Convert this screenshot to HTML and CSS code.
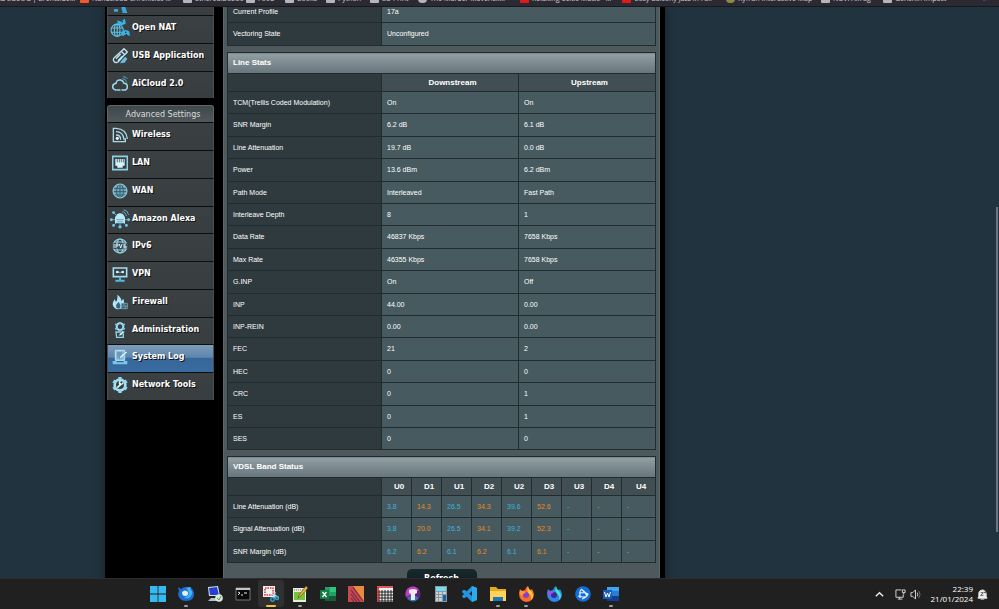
FILE: index.html
```
<!DOCTYPE html>
<html lang="en">
<head>
	<meta charset="utf-8">
	<meta name="viewport" content="width=device-width, initial-scale=1.0">
	<title>System Log - DSL</title>
	<link rel="stylesheet" href="styles.css">
</head>
<body>
	<nav class="bookmarks" aria-label="Bookmarks">
		<a href="#">&amp; SGCOG | Brentside…</a>
		<a href="#"><i class="fav orange"></i>Nandcloud Chronicles …</a>
		<a href="#"><i class="fav"></i>EtherealDSLOs</a>
		<a href="#"><i class="fav"></i>Food</a>
		<a href="#"><i class="fav"></i>Books</a>
		<a href="#"><i class="fav"></i>Python</a>
		<a href="#"><i class="fav"></i>3D Print</a>
		<a href="#"><i class="fav globe"></i>The Murder Maverick…</a>
		<a href="#"><i class="fav red"></i>Relaxing Celtic Music - …</a>
		<a href="#"><i class="fav red"></i>Cosy Balcony Jazz in Fall</a>
		<a href="#"><i class="fav olive"></i>Kyfrun Interactive Map</a>
		<a href="#"><i class="fav"></i>NUVI Alfrug</a>
		<a href="#"><i class="fav"></i>Genshin Impact</a>
		<a href="#">»</a>
	</nav>

	<div class="page">
		<div class="wrap">
			<nav class="menu" aria-label="Router menu">
				<ul class="general">
					<li class="cut"><svg viewBox="0 0 24 24"><path d="M3 15h6v4H3zM14 12h6l3 9h-7z" fill="#37a9dc"/></svg></li>
					<li><a href="#">
						<svg class="big" viewBox="0 0 28 28"><g fill="none" stroke="#5cc0e6" stroke-width="1.6"><circle cx="10" cy="17" r="8.5"/><ellipse cx="10" cy="17" rx="4" ry="8.5"/><path d="M2 14h16M2 20h16M10 8v18"/></g><path d="M10 3l5 2 6-4 1 7-5 2-6-2zM18 18q5-3 9 1l1 6-3-1-2-2-4 3-3 0z" fill="#37b4e5"/><circle cx="17" cy="5" r="1" fill="#123"/><circle cx="22" cy="20" r="1" fill="#123"/></svg>
						Open NAT</a></li>
					<li><a href="#">
						<svg viewBox="0 0 24 24"><g fill="none" stroke="#c0e8f5" stroke-width="2" stroke-linejoin="round"><path d="M3 15L14 5l5 5L9 21q-4 2-6-1-2-2 0-5zM14 5l4-4 5 5-4 4M6 16l7-7M9 19l7-7"/></g><path d="M15 18l5-5 3 3-4 6-7 1z" fill="#65bddd"/></svg>
						USB Application</a></li>
					<li><a href="#">
						<svg viewBox="0 0 24 24"><g fill="none" stroke="#9fd9ee" stroke-width="2.2" stroke-linecap="round"><path d="M6 21q-5-1-5-5t5-5q1-6 7-5 4 1 5 5 5 0 5 5t-5 5h-3M8 21h4"/><path d="M16 4q5 0 6 5M17 1q5 0 6 3" stroke="#55a8ca" stroke-width="1.4"/></g></svg>
						AiCloud 2.0</a></li>
				</ul>
				<h2>Advanced Settings</h2>
				<ul class="advanced">
					<li><a href="#">
						<svg viewBox="0 0 24 24"><g fill="none" stroke="#add9e6" stroke-width="2"><path d="M6 2H2v20h18v-5M6 7q11 0 12 12M6 12q7 0 7 7M6 2q16 1 17 16"/></g><circle cx="8" cy="17" r="2.4" fill="#e3f7fb"/></svg>
						Wireless</a></li>
					<li><a href="#">
						<svg viewBox="0 0 24 24"><path d="M1 2h22v20H1z" fill="none" stroke="#8bd2e9" stroke-width="2.4"/><path d="M5 6h14v10h-3v3H8v-3H5z" fill="#d6f4fb"/><path d="M8 6v5M11 6v5M14 6v5M17 6v5" stroke="#39515c" stroke-width="1.2"/></svg>
						LAN</a></li>
					<li><a href="#">
						<svg viewBox="0 0 24 24"><circle cx="12" cy="12" r="10.5" fill="#69a8c2"/><g fill="none" stroke="#3a535e" stroke-width="1.3"><ellipse cx="12" cy="12" rx="5" ry="10"/><path d="M2 8h20M1 13h22M3 18h18M12 1v22"/></g><circle cx="12" cy="12" r="10.5" fill="none" stroke="#a5dcec" stroke-width="1.4"/></svg>
						WAN</a></li>
					<li><a href="#">
						<svg class="big" viewBox="0 0 28 28"><path d="M7 20V12q2-6 7-6t7 6v8z" fill="#b9eaf6"/><path d="M9 15h10M10 18h8" stroke="#4b8396"/><g fill="#72cdec"><circle cx="2" cy="15" r="2"/><circle cx="26" cy="15" r="2"/><circle cx="5" cy="5" r="2"/><circle cx="5" cy="23" r="2"/><circle cx="23" cy="23" r="2"/><circle cx="14" cy="25" r="2.4"/></g><path d="M5 5l5 5M5 23l4-4M23 23l-4-4M14 20v5M2 15h5M21 15h5M17 4q5 0 6 6M19 1q6 1 7 7" fill="none" stroke="#62b5d2" stroke-width="1.3"/></svg>
						Amazon Alexa</a></li>
					<li><a href="#">
						<svg viewBox="0 0 24 24"><g fill="none" stroke="#96d4e8" stroke-width="1.7"><circle cx="12" cy="12" r="10.5"/><ellipse cx="12" cy="12" rx="5" ry="10.5"/><path d="M3 6h18M3 18h18"/></g><path d="M0 8h24v8H0z" fill="#3b5059"/><path d="M3 9v6M6 15V9h3v3H6M11 9l2 6 2-6M21 9h-3v6h3v-3h-3" fill="none" stroke="#daf7ff" stroke-width="1.4"/></svg>
						IPv6</a></li>
					<li><a href="#">
						<svg viewBox="0 0 24 24"><path d="M2 3h20v13H2z" fill="none" stroke="#a4def0" stroke-width="2.4"/><path d="M6 9.500h12" stroke="#71a7ba" stroke-width="1.500"/><circle cx="8" cy="9" r="2" fill="#d8f6ff"/><circle cx="16" cy="9" r="2" fill="#d8f6ff"/><path d="M12 16v5M5 22h14" stroke="#52b9df" stroke-width="3"/></svg>
						VPN</a></li>
					<li><a href="#">
						<svg viewBox="0 0 24 24"><path d="M8 1q7 5 6 10l3-4q3 9-2 14-6 4-11 0Q-2 16 4 8l2 4Q9 8 8 1z" fill="#b2e6f7"/><path d="M10 12q5 6 1 10-5 0-5-4 0-3 4-6z" fill="#316780"/><path d="M14 14h9v8h-9zM14 18h9M18 14v4M20 18v4" fill="#3c5a67" stroke="#76aabd" stroke-width="1.200"/></svg>
						Firewall</a></li>
					<li><a href="#">
						<svg viewBox="0 0 24 24"><circle cx="12" cy="7" r="5" fill="none" stroke="#a8e2f3" stroke-width="3"/><path d="M12 0v3M12 11v3M5 3l3 2M16 9l3 2M5 11l3-2M16 5l3-2" stroke="#7accea" stroke-width="3"/><path d="M6 15h11v8H7z" fill="none" stroke="#8dd5ed" stroke-width="2"/><path d="M10 21l1-3 5-5 3 2-5 5z" fill="#e3faff" stroke="#35647a"/></svg>
						Administration</a></li>
					<li class="current"><a href="#" aria-current="page">
						<svg viewBox="0 0 24 24"><path d="M5 2h14v15H5z" fill="#8ebbd9" stroke="#c1e4f4" stroke-width="1.500"/><path d="M8 6h7M8 9h6M8 12h4" stroke="#39688e" stroke-width="1.300"/><path d="M11 15l1-4 9-8 2 2-8 8z" fill="#e0f5ff" stroke="#487da5" stroke-width=".8"/><path d="M1 18h5l2 2h9l1-2h5v5H1z" fill="#75c9f1"/></svg>
						System Log</a></li>
					<li><a href="#">
						<svg viewBox="0 0 24 24"><circle cx="12" cy="12" r="8" fill="none" stroke="#a6e1f2" stroke-width="4"/><path d="M12 0v4M12 20v4M2 6l3 2M19 16l3 2M2 18l3-2M19 8l3-2" stroke="#8fd8f0" stroke-width="5"/><path d="M8 16l5-5" stroke="#d9f7ff" stroke-width="2.500"/><path d="M16 8l-2 2-2-2 2-2q-4-1-4 3t4 3 3-4z" fill="#d9f7ff"/></svg>
						Network Tools</a></li>
				</ul>
			</nav>

			<main class="content">
				<table class="stats status">
					<colgroup><col class="label"><col></colgroup>
					<tbody>
						<tr><th scope="row">Current Profile</th><td>17a</td></tr>
						<tr><th scope="row">Vectoring State</th><td>Unconfigured</td></tr>
					</tbody>
				</table>

				<table class="stats line">
					<colgroup><col class="label"><col><col></colgroup>
					<thead>
						<tr class="title"><th colspan="3">Line Stats</th></tr>
						<tr class="heads"><td></td><th scope="col">Downstream</th><th scope="col">Upstream</th></tr>
					</thead>
					<tbody>
						<tr><th scope="row">TCM(Trellis Coded Modulation)</th><td>On</td><td>On</td></tr>
						<tr><th scope="row">SNR Margin</th><td>6.2 dB</td><td>6.1 dB</td></tr>
						<tr><th scope="row">Line Attenuation</th><td>19.7 dB</td><td>0.0 dB</td></tr>
						<tr><th scope="row">Power</th><td>13.6 dBm</td><td>6.2 dBm</td></tr>
						<tr><th scope="row">Path Mode</th><td>Interleaved</td><td>Fast Path</td></tr>
						<tr><th scope="row">Interleave Depth</th><td>8</td><td>1</td></tr>
						<tr><th scope="row">Data Rate</th><td>46837 Kbps</td><td>7658 Kbps</td></tr>
						<tr><th scope="row">Max Rate</th><td>46355 Kbps</td><td>7658 Kbps</td></tr>
						<tr><th scope="row">G.INP</th><td>On</td><td>Off</td></tr>
						<tr><th scope="row">INP</th><td>44.00</td><td>0.00</td></tr>
						<tr><th scope="row">INP-REIN</th><td>0.00</td><td>0.00</td></tr>
						<tr><th scope="row">FEC</th><td>21</td><td>2</td></tr>
						<tr><th scope="row">HEC</th><td>0</td><td>0</td></tr>
						<tr><th scope="row">CRC</th><td>0</td><td>1</td></tr>
						<tr><th scope="row">ES</th><td>0</td><td>1</td></tr>
						<tr><th scope="row">SES</th><td>0</td><td>0</td></tr>
					</tbody>
				</table>

				<table class="stats bands">
					<colgroup><col class="label"><col class="band" span="8"><col></colgroup>
					<thead>
						<tr class="title"><th colspan="10">VDSL Band Status</th></tr>
						<tr class="heads"><td></td><th scope="col">U0</th><th scope="col">D1</th><th scope="col">U1</th><th scope="col">D2</th><th scope="col">U2</th><th scope="col">D3</th><th scope="col">U3</th><th scope="col">D4</th><th scope="col">U4</th></tr>
					</thead>
					<tbody>
						<tr><th scope="row">Line Attenuation (dB)</th><td>3.8</td><td>14.3</td><td>26.5</td><td>34.3</td><td>39.6</td><td>52.6</td><td>-</td><td>-</td><td>-</td></tr>
						<tr><th scope="row">Signal Attenuation (dB)</th><td>3.8</td><td>20.0</td><td>26.5</td><td>34.1</td><td>39.2</td><td>52.3</td><td>-</td><td>-</td><td>-</td></tr>
						<tr><th scope="row">SNR Margin (dB)</th><td>6.2</td><td>6.2</td><td>6.1</td><td>6.2</td><td>6.1</td><td>6.1</td><td>-</td><td>-</td><td>-</td></tr>
					</tbody>
				</table>
				<button type="button" class="refresh">Refresh</button>
			</main>
		</div>
		<div class="scrollbar"></div>
	</div>

	<footer class="taskbar">
		<div class="apps">
			<button type="button" aria-label="Start"><svg viewBox="0 0 16 16"><path d="M0 0h7.600v7.600H0zM8.400 0H16v7.600H8.400zM0 8.400h7.600V16H0zM8.400 8.400H16V16H8.400z" fill="#37b8ee"/></svg></button>
			<button type="button" class="open" aria-label="Thunderbird"><svg viewBox="0 0 16 16"><path d="M1 5L0 1l3 2Q5 1 8 1h4q4 3 4 7 0 7-8 7Q1 15 0 8z" fill="#1c70d3"/><path d="M8 2l5-1-1 2q4 3 1 7-3 4-7 1 5 0 5-4Q10 3 8 2z" fill="#46b5f5"/><path d="M4 6q3-3 6 0 1 4-3 4-3 0-3-4z" fill="#dceefa"/></svg></button>
			<button type="button" aria-label="Remote desktop"><svg viewBox="0 0 16 16"><path d="M1 1l10-1 2 10H2z" fill="#d8e0e7"/><path d="M2 2l8-1 2 8H3z" fill="#2440d2"/><path d="M4 12h7l2 3H1z" fill="#b4c0c9"/><circle cx="12" cy="12" r="3.800" fill="#dde8dd"/><path d="M10 12l2 2 2-4" fill="none" stroke="#4d9d57"/></svg></button>
			<button type="button" aria-label="Command Prompt"><svg viewBox="0 0 16 16"><path d="M1 2h14v12H1z" fill="#090909" stroke="#777"/><path d="M1 2h14v2H1z" fill="#c5c5c5"/><path d="M3 6l2 1-2 2M6 9h2M9 7h3" fill="none" stroke="#eee"/></svg></button>
			<button type="button" class="active" aria-label="Snipping Tool"><svg viewBox="0 0 16 16"><path d="M0 0h12v11H0z" fill="#f2f3f4"/><path d="M2 2h8v7H2z" fill="none" stroke="#dc2c2c" stroke-width="1.500" stroke-dasharray="1.500 1"/><path d="M9 8l6 3M12 6l-1 6" stroke="#b9d8e8" stroke-width="1.500"/><circle cx="9.500" cy="13.500" r="1.800" fill="none" stroke="#37a9e0" stroke-width="1.300"/><circle cx="14" cy="12" r="1.500" fill="none" stroke="#37a9e0" stroke-width="1.300"/></svg></button>
			<button type="button" class="open" aria-label="Notepad++"><svg viewBox="0 0 16 16"><path d="M1 2h13v14H1z" fill="#e9edd9"/><path d="M2 6h11v8H2z" fill="#75c440"/><path d="M2 4h9" stroke="#777" stroke-dasharray="1 1"/><path d="M6 12l1-3 7-9 2 2-7 8z" fill="#e9b730" stroke="#553d22" stroke-width=".600"/></svg></button>
			<button type="button" aria-label="Excel"><svg viewBox="0 0 16 16"><path d="M5 1h11v14H5z" fill="#21a366"/><path d="M10 1h6v5h-6z" fill="#33c481"/><path d="M5 10h11v5H5z" fill="#185c37"/><path d="M0 4h9v9H0z" fill="#107c41"/><path d="M2.500 6l4 5M6.500 6l-4 5" stroke="#fff" stroke-width="1.300"/></svg></button>
			<button type="button" aria-label="Publisher"><svg viewBox="0 0 16 16"><path d="M0 0h16v16H0z" fill="#c94751"/><path d="M5 0h11v16z" fill="#e88b42"/><path d="M3 4l9 12M3 8l6 8M3 12l3 4M5 1l10 14" stroke="#752d43" stroke-width="1.200"/></svg></button>
			<button type="button" aria-label="Grid"><svg viewBox="0 0 16 16"><path d="M0 0h16v16H0z" fill="#f1f1f1"/><path d="M2 4v12M5 4v12M8 4v12M11 4v12M14 4v12M0 6h16M0 9h16M0 12h16M0 15h16" stroke="#222"/><path d="M0 1h16M1 1v15" fill="none" stroke="#dc2727" stroke-width="1.600"/></svg></button>
			<button type="button" aria-label="Private browser"><svg viewBox="0 0 16 16"><circle cx="8" cy="8" r="7.600" fill="#63207c"/><path d="M1 11q-2-7 4-10 6-2 9 3L8 8z" fill="#c03cc3"/><path d="M2 12q6 7 12 0L8 8z" fill="#2d79b1"/><path d="M4 4q4-2 8 0v3l-2 1v6H6V8L4 7z" fill="#f2e7ed"/></svg></button>
			<button type="button" aria-label="Calculator"><svg viewBox="0 0 16 16"><path d="M2 0h12v16H2z" fill="#8b98a0"/><path d="M3 1h10v4H3z" fill="#75dcf1"/><path d="M3 6h2v2H3zM6 6h3v2H6zM3 9h2v2H3zM6 9h3v2H6zM3 12h2v3H3zM6 12h3v3H6zM10 6h3v2h-3z" fill="#c9d0d4"/><path d="M10 9h3v6h-3z" fill="#17639e"/></svg></button>
			<button type="button" aria-label="Visual Studio Code"><svg viewBox="0 0 16 16"><path d="M11 0l5 2v12l-5 2L1 6l1-2h2l7 6V5L4 12H2l-1-2z" fill="#2293df"/><path d="M11 0l5 2v12l-5 2z" fill="#31a8ee"/></svg></button>
			<button type="button" class="open" aria-label="File Explorer"><svg viewBox="0 0 16 16"><path d="M0 1h6l2 2h8v12H0z" fill="#e7a91d"/><path d="M0 5h16v10H0z" fill="#ffd35a"/><path d="M3 11h10v4H3z" fill="#1877bd"/></svg></button>
			<button type="button" class="open" aria-label="Firefox"><svg viewBox="0 0 16 16"><path d="M1 7l1-4 2 2 3-1q1-3 3-4 0 3 3 4l1-1q2 3 2 6-1 7-8 7-7-1-7-9z" fill="#ff6b2b"/><path d="M10 0q0 3 3 5 4 5 0 9 1-5-3-7-1-3 0-7z" fill="#ffcd38"/><circle cx="8" cy="9" r="3" fill="#8244c6"/><path d="M2 5q3-1 6 2-3 0-4 3-2 0-2-5z" fill="#ff9b28"/></svg></button>
			<button type="button" aria-label="Firefox Developer Edition"><svg viewBox="0 0 16 16"><path d="M1 7l1-4 2 2 3-1q1-3 3-4 0 3 3 4l1-1q2 3 2 6-1 7-8 7-7-1-7-9z" fill="#2f86f0"/><path d="M10 0q0 3 3 5 4 5 0 9 1-5-3-7-1-3 0-7z" fill="#42e6c0"/><circle cx="8" cy="9" r="3" fill="#3a2a91"/><path d="M2 5q3-1 6 2-3 0-4 3-2 0-2-5z" fill="#a44ee8"/></svg></button>
			<button type="button" aria-label="Battle.net"><svg viewBox="0 0 16 16"><circle cx="8" cy="8" r="7.800" fill="#146cd8"/><path d="M6 3q7 5 6 7-2 2-9 0M5 12V7q0-4 2-3 3 2 5 6M4 7q8-1 9 1-1 3-6 5" fill="none" stroke="#e4f4ff" stroke-width="1.100"/></svg></button>
			<button type="button" class="open" aria-label="Word"><svg viewBox="0 0 16 16"><path d="M4 1h12v14H4z" fill="#2b7cd3"/><path d="M4 1h12v4H4z" fill="#41a5ee"/><path d="M4 10h12v5H4z" fill="#103f91"/><path d="M0 4h9v9H0z" fill="#185abd"/><path d="M1.500 6l1.500 5 1.500-4L6 11l1.500-5" fill="none" stroke="#fff"/></svg></button>
		</div>
		<div class="tray">
			<button type="button" aria-label="Show hidden icons"><svg viewBox="0 0 12 12"><path d="M2 8l4-4 4 4" fill="none" stroke="#eee" stroke-width="1.500"/></svg></button>
			<button type="button" aria-label="Network"><svg viewBox="0 0 12 12"><path d="M7 1H1v8h8V6M3 11h5M5 9v2M8 1h3v3H8zM9.500 4v2" fill="none" stroke="#ddd"/></svg></button>
			<button type="button" aria-label="Volume"><svg viewBox="0 0 12 12"><path d="M1 4h2l3-3v10L3 8H1zM8 4q1 2 0 4" fill="none" stroke="#ddd"/><path d="M9.500 2q3 4 0 8" fill="none" stroke="#777"/></svg></button>
			<div class="clock"><time>22:39</time><time>21/01/2024</time></div>
			<button type="button" aria-label="Notifications"><svg viewBox="0 0 12 12"><path d="M2 8V4q1-3 4-3t4 3v4l1 2H1zM4 11h4" fill="#eee" stroke="#eee"/><path d="M4 4h3L4 7h3M8 2h3L8 4h3" fill="none" stroke="#333" stroke-width=".800"/></svg></button>
		</div>
	</footer>
</body>
</html>
```

FILE: styles.css
```
* {
	box-sizing: border-box;
}
body {
	display: flex;
	flex-direction: column;
	height: 100vh;
	margin: 0;
	overflow: hidden;
	background: #21333e;
	color: #fff;
	font-family: "Liberation Sans", Arial, sans-serif;
	font-size: 7px;
}
a {
	color: inherit;
	text-decoration: none;
}
button {
	border: 0;
	padding: 0;
	background: none;
	color: inherit;
}
svg {
	display: block;
}

/* bottom edge of the browser's bookmarks bar */
.bookmarks {
	display: grid;
	grid-template-columns: 80px 103px 63px 39px 41px 44px 48px 102px 102px 104px 95px 62px 1fr 16px;
	grid-template-rows: 100%;
	align-items: end;
	flex: none;
	height: 7px;
	overflow: hidden;
	border-bottom: 1px solid #17191e;
	background: #2b2a33;
	color: #d0d0d4;
	font: 7px/12px "Open Sans", sans-serif;
}
.bookmarks a {
	display: flex;
	align-items: center;
	gap: 3px;
	height: 12px;
	margin-bottom: 1px;
	white-space: nowrap;
}
.fav {
	width: 9px;
	height: 8px;
	border-radius: 1px;
	background: #b5b5b9;
}
.fav.orange {
	background: #f1592a;
}
.fav.red {
	background: #e01919;
}
.fav.globe, .fav.olive {
	border-radius: 4px;
}
.fav.olive {
	background: #8c8b45;
}

.page {
	position: relative;
	flex: 1;
	min-height: 0;
	overflow: hidden;
}
.wrap {
	display: flex;
	gap: 9px;
	width: 560px;
	max-width: 100%;
	min-height: 100%;
	margin-left: 105px;
	padding: 0 5px 0 2px;
	background: #000;
	box-shadow: 0 0 8px #14222b;
}
.scrollbar {
	position: absolute;
	top: 35%;
	right: 1px;
	width: 2px;
	height: 57%;
	background: #6f747e;
}

/* left menu */
.menu {
	flex: 0 0 107px;
}
.menu ul {
	margin: 0;
	padding: 0;
	list-style: none;
}
.menu li {
	height: 28px;
	border: 1px solid #4a5052;
	border-top-color: #0b0e0f;
	border-bottom: 0;
	background: linear-gradient(#3b4143, #383d40);
}
.menu li:nth-child(4n) {
	height: 27px;
}
.menu .cut {
	height: 8px;
	padding-left: 4px;
	overflow: hidden;
	border-top: 0;
}
.menu .cut svg {
	margin-top: -8px;
}
.menu li a {
	display: flex;
	align-items: center;
	gap: 4px;
	height: 24px;
	padding-left: 4px;
	font: bold 8px/12px "DejaVu Sans", Verdana, sans-serif;
	text-shadow: 1px 1px 0 #111;
	white-space: nowrap;
}
.menu svg {
	flex: none;
	width: 16px;
	height: 16px;
}
.menu svg.big {
	width: 20px;
	height: 20px;
	margin: 0 -2px;
}
.menu .current {
	background: linear-gradient(#7e9dbb, #5e85ab 45%, #36669a 50%, #3a6b9f);
}
.menu h2 {
	height: 17px;
	margin: 7px 0 0;
	padding-left: 5px;
	border: 1px solid #5d676a;
	border-bottom: 0;
	border-radius: 3px 3px 0 0;
	background: linear-gradient(#3f484b, #4f595c);
	color: #ddd;
	font: 8px/17px "DejaVu Sans", Verdana, sans-serif;
	text-align: center;
}

/* stats tables */
.content {
	flex: 1;
	min-width: 0;
	padding: 0 3px;
	border: 1px solid #5b676b;
	border-width: 0 1px;
	background: #4d595d;
}
.stats {
	width: 100%;
	margin-bottom: 6px;
	border-collapse: collapse;
	table-layout: fixed;
}
.stats .label {
	width: 154px;
}
.stats .band {
	width: 30px;
}
.stats th, .stats td {
	padding: 0 0 0 5px;
	border: 1px solid #222b2e;
	line-height: 10px;
	text-align: left;
}
.stats tbody tr {
	height: 22px;
}
.stats tbody tr:nth-child(5n+2), .stats tbody tr:nth-child(5n+4) {
	height: 23px;
}
.stats tbody th {
	background: #2f3a3e;
	font-weight: normal;
}
.stats td {
	background: #475a5f;
}
.stats .title {
	height: 21px;
}
.stats .title th {
	background: linear-gradient(#92a0a5, #66757c);
	font-size: 8px;
}
.stats .heads {
	height: 18px;
}
.stats .heads td {
	background: #2f3a3e;
}
.stats .heads th {
	background: #414f54;
	font-size: 8px;
	text-align: center;
}
/* scrolled half under the bookmarks bar */
.stats.status tbody tr:first-child {
	height: 15px;
}
.status tr:first-child th, .status tr:first-child td {
	padding-bottom: 5px;
	border-top: 0;
	line-height: 10px;
}
.bands tbody td {
	color: #3ab4de;
}
.bands tbody td:nth-child(odd) {
	color: #e88b1c;
}
.refresh {
	display: block;
	width: 70px;
	height: 20px;
	margin: 0 auto;
	border-radius: 5px;
	background: linear-gradient(#182a2f, #0c181c);
	font: bold 8px/20px "DejaVu Sans", Verdana, sans-serif;
}

/* Windows taskbar */
.taskbar {
	display: flex;
	justify-content: space-between;
	flex: none;
	height: 31px;
	padding: 0 11px 0 144px;
	border-top: 1px solid #2c2c2c;
	background: #202020;
}
.apps {
	display: grid;
	grid-template-columns: repeat(17, 1fr);
	flex: 0 0 57%;
}
.apps button {
	display: flex;
	flex-direction: column;
	align-items: center;
	height: 27px;
	margin: 1px;
	padding-top: 6px;
	border-radius: 3px;
}
.apps svg {
	width: 16px;
	height: 16px;
}
.apps button::after {
	content: "";
	width: 4px;
	height: 2px;
	margin-top: 3px;
	border-radius: 1px;
}
.apps .open::after {
	background: #9b9b9b;
}
.apps .active {
	background: #303030;
}
.apps .active::after {
	width: 10px;
	background: #f5c431;
}
.tray {
	display: flex;
	align-items: center;
	gap: 4px;
}
.tray svg {
	width: 11px;
	height: 11px;
}
.tray button:first-child {
	margin-right: 6px;
}
.clock {
	display: flex;
	flex-direction: column;
	margin: 0 0 0 6px;
	font: 8px/10px "Open Sans", sans-serif;
	text-align: right;
}
```
